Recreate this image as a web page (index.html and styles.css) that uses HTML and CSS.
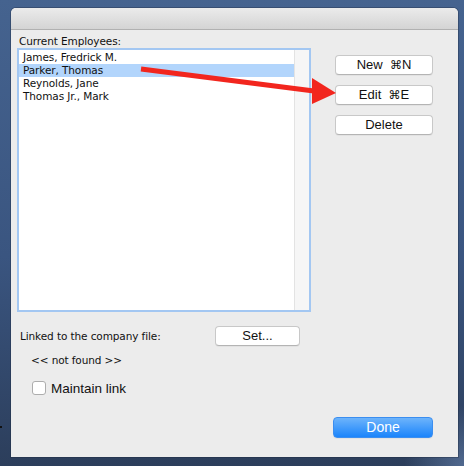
FILE: index.html
```html
<!DOCTYPE html>
<html lang="en">
<head>
<meta charset="utf-8">
<title>Employees</title>
<link rel="stylesheet" href="styles.css">
</head>
<body>
<div class="desktop">
  <div class="window">
    <div class="titlebar"></div>
    <div class="content">
      <div class="top">
        <div class="list-col">
          <div class="label">Current Employees:</div>
          <div class="listbox">
            <div class="rows">
              <div class="row">James, Fredrick M.</div>
              <div class="row selected">Parker, Thomas</div>
              <div class="row">Reynolds, Jane</div>
              <div class="row">Thomas Jr., Mark</div>
            </div>
            <div class="scrolltrack"></div>
          </div>
        </div>
        <div class="actions">
          <button class="btn">New&nbsp;&nbsp;<span class="cmd">⌘</span>N</button>
          <button class="btn">Edit&nbsp;&nbsp;<span class="cmd">⌘</span>E</button>
          <button class="btn">Delete</button>
        </div>
      </div>
      <div class="link-row">
        <span class="small">Linked to the company file:</span>
        <button class="btn set">Set...</button>
      </div>
      <div class="small status">&lt;&lt; not found &gt;&gt;</div>
      <label class="check-row"><span class="checkbox"></span><span>Maintain link</span></label>
      <div class="footer">
        <button class="btn primary">Done</button>
      </div>
    </div>
  </div>
  <div class="edge-mark"></div>
  <svg class="arrow" width="464" height="466" viewBox="0 0 464 466">
    <line x1="141" y1="69" x2="314" y2="91" stroke="#f2261e" stroke-width="5"/>
    <polygon points="312,78 336,93 312,104" fill="#f2261e"/>
  </svg>
</div>
</body>
</html>
```

FILE: styles.css
```css
html, body {
  margin: 0;
  padding: 0;
}

.desktop {
  position: relative;
  width: 464px;
  height: 466px;
  overflow: hidden;
  background:
    radial-gradient(circle at 100% 100%, rgba(110, 140, 185, 0.55) 0, rgba(110, 140, 185, 0) 60px),
    linear-gradient(#45638f, #3a5580 55%, #2c3e5b);
  padding: 8px 6px 9px 11px;
  box-sizing: border-box;
}

.window {
  width: 447px;
  height: 449px;
  background: #ececec;
  border-radius: 5px 5px 0 0;
  display: flex;
  flex-direction: column;
  overflow: hidden;
  box-shadow: 0 0 0 1px rgba(30, 40, 60, 0.35);
}

.titlebar {
  height: 21px;
  background: linear-gradient(#ebebeb, #d4d4d4);
  border-bottom: 1px solid #b1b1b1;
  flex: none;
}

.content {
  flex: 1;
  display: flex;
  flex-direction: column;
  padding: 5px 25px 0 6px;
  font-family: "DejaVu Sans", Verdana, sans-serif;
  font-size: 10.5px;
  color: #111;
}

.top {
  display: flex;
  gap: 24px;
}

.list-col {
  width: 294px;
  display: flex;
  flex-direction: column;
}

.label {
  height: 13px;
  line-height: 13px;
  padding-left: 2px;
  letter-spacing: -0.1px;
}

.listbox {
  height: 264px;
  box-sizing: border-box;
  border: 2px solid #a3c7f2;
  background: #fff;
  display: flex;
}

.rows {
  flex: 1;
  padding-top: 1px;
}

.row {
  height: 13px;
  line-height: 13px;
  padding-left: 4px;
  letter-spacing: -0.1px;
}

.row.selected {
  background: #b2d5fc;
}

.scrolltrack {
  width: 14px;
  background: #f6f6f6;
  border-left: 1px solid #e3e3e3;
}

.actions {
  display: flex;
  flex-direction: column;
  gap: 10px;
  padding-top: 20px;
  width: 98px;
}

.btn {
  height: 20px;
  box-sizing: border-box;
  background: #fff;
  border: 1px solid #c8c8c8;
  border-bottom-color: #b4b4b4;
  border-radius: 4px;
  font-family: "Liberation Sans", Arial, sans-serif;
  font-size: 13px;
  color: #111;
  padding: 0;
  line-height: 18px;
  box-shadow: 0 1px 0 rgba(0, 0, 0, 0.04);
}

.cmd {
  font-family: "DejaVu Sans", sans-serif;
  font-size: 12px;
}

.link-row {
  display: flex;
  align-items: center;
  margin-top: 14px;
  padding-left: 3px;
}

.link-row .small {
  width: 195px;
}

.set {
  width: 85px;
  height: 20px;
}

.small {
  line-height: 13px;
  letter-spacing: -0.1px;
}

.status {
  margin-top: 8px;
  padding-left: 14px;
}

.check-row {
  display: flex;
  align-items: center;
  gap: 5px;
  margin-top: 13px;
  padding-left: 15px;
  font-family: "Liberation Sans", Arial, sans-serif;
  font-size: 13.5px;
  height: 16px;
}

.checkbox {
  width: 12px;
  height: 12px;
  border: 1px solid #adadad;
  border-radius: 3px;
  background: #fff;
}

.footer {
  display: flex;
  justify-content: flex-end;
  margin-top: 21px;
}

.primary {
  width: 100px;
  height: 21px;
  background: linear-gradient(#6db4fb, #1b84fb);
  border-color: #3b8ef0;
  color: #fff;
  font-size: 14px;
  line-height: 19px;
}

.edge-mark {
  position: absolute;
  left: 0;
  top: 426px;
  width: 2px;
  height: 2px;
  background: #111;
}

.arrow {
  position: absolute;
  left: 0;
  top: 0;
}
```
